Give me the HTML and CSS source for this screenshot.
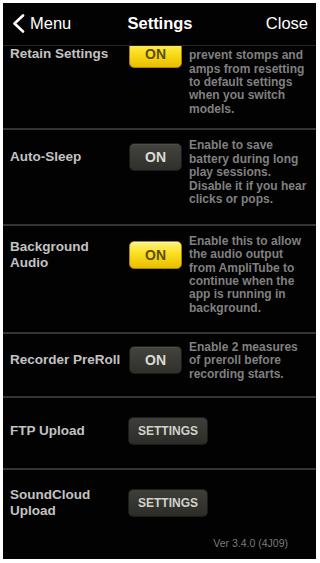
FILE: index.html
```html
<!DOCTYPE html>
<html>
<head>
<meta charset="utf-8">
<link rel="stylesheet" href="styles.css">
</head>
<body>
<div class="app">
  <header class="nav">
    <div class="nav-left">
      <svg class="chev" width="13" height="19" viewBox="0 0 13 19"><path d="M11 1.5 L2.5 9.5 L11 17.5" fill="none" stroke="#fff" stroke-width="2.6" stroke-linecap="round" stroke-linejoin="round"/></svg>
      <span>Menu</span>
    </div>
    <div class="nav-title">Settings</div>
    <div class="nav-right">Close</div>
  </header>
  <div class="scroll">
    <div class="list">
      <div class="row row-retain">
        <div class="item">
          <div class="main"><div class="label">Retain Settings</div><div class="toggle on">ON</div></div>
          <div class="desc">Enable this to<br>prevent stomps and<br>amps from resetting<br>to default settings<br>when you switch<br>models.</div>
        </div>
      </div>
      <div class="row row-auto">
        <div class="item">
          <div class="main"><div class="label">Auto-Sleep</div><div class="toggle">ON</div></div>
          <div class="desc">Enable to save<br>battery during long<br>play sessions.<br>Disable it if you hear<br>clicks or pops.</div>
        </div>
      </div>
      <div class="row row-bg">
        <div class="item">
          <div class="main"><div class="label">Background<br>Audio</div><div class="toggle on">ON</div></div>
          <div class="desc">Enable this to allow<br>the audio output<br>from AmpliTube to<br>continue when the<br>app is running in<br>background.</div>
        </div>
      </div>
      <div class="row row-rec">
        <div class="item">
          <div class="main"><div class="label">Recorder PreRoll</div><div class="toggle">ON</div></div>
          <div class="desc desc-short">Enable 2 measures<br>of preroll before<br>recording starts.</div>
        </div>
      </div>
      <div class="row row-ftp">
        <div class="item">
          <div class="main"><div class="label">FTP Upload</div><div class="btn">SETTINGS</div></div>
        </div>
      </div>
      <div class="row-last">
        <div class="item">
          <div class="main"><div class="label">SoundCloud<br>Upload</div><div class="btn">SETTINGS</div></div>
        </div>
        <div class="version">Ver 3.4.0 (4J09)</div>
      </div>
    </div>
  </div>
</div>
</body>
</html>
```
FILE: styles.css
```css
html, body {
  margin: 0;
  padding: 0;
  background: #fff;
}
body {
  font-family: "Liberation Sans", Arial, sans-serif;
}
.app {
  margin: 3px 4px 4px 3px;
  width: 313px;
  height: 556px;
  background: #020202;
  display: flex;
  flex-direction: column;
  overflow: hidden;
}
.nav {
  height: 43px;
  box-sizing: border-box;
  border-bottom: 1px solid #262626;
  display: grid;
  grid-template-columns: 1fr auto 1fr;
  align-items: center;
  padding: 0 8px 1px 9px;
  color: #fff;
  font-size: 16.5px;
  flex: none;
}
.nav-left {
  display: flex;
  align-items: center;
  gap: 5px;
}
.chev { display: block; }
.nav-title {
  font-weight: bold;
  font-size: 16.5px;
}
.nav-right {
  text-align: right;
}
.scroll {
  flex: 1;
  overflow: hidden;
}
.list {
  margin-top: -22px;
}
.row {
  box-sizing: border-box;
  border-bottom: 2px solid #343434;
  display: flex;
  align-items: center;
  padding: 0 0 8px 7px;
}
.row-retain { height: 106px; padding-bottom: 0; }
.row-auto { height: 96px; }
.row-bg { height: 108px; }
.row-rec { height: 64px; }
.row-ftp { height: 72px; }
.row-last {
  padding: 17px 0 0 7px;
}
.item {
  display: flex;
  align-items: flex-start;
}
.main {
  display: flex;
  align-items: center;
  margin-top: 4px;
}
.row-rec .main { margin-top: 5px; }
.row-last .main { margin-top: 0; }
.label {
  width: 119px;
  color: #c2c2c2;
  font-weight: bold;
  font-size: 13.5px;
  line-height: 16px;
}
.toggle {
  width: 53px;
  height: 28px;
  box-sizing: border-box;
  border-radius: 5px;
  display: flex;
  align-items: center;
  justify-content: center;
  font-weight: bold;
  font-size: 14px;
  color: #dcdcd6;
  background: linear-gradient(#44443f, #2f2f2b);
  border: 1px solid #1c1c1a;
  box-shadow: inset 0 1px 0 rgba(255,255,255,0.06);
}
.toggle.on {
  color: #5e4e00;
  background: linear-gradient(#fff27a 0%, #fadf1e 45%, #e9be00 100%);
  border: 1px solid #a88400;
  box-shadow: inset 0 1px 0 rgba(255,255,255,0.5);
}
.btn {
  width: 80px;
  height: 28px;
  box-sizing: border-box;
  border-radius: 5px;
  display: flex;
  align-items: center;
  justify-content: center;
  font-weight: bold;
  font-size: 12px;
  color: #d2d2cc;
  background: linear-gradient(#3e3e3a, #2c2c29);
  border: 1px solid #1c1c1a;
  margin-left: -1px;
}
.desc {
  margin-left: 7px;
  color: #808080;
  font-weight: bold;
  font-size: 12px;
  line-height: 13.4px;
  white-space: nowrap;
}
.version {
  margin-top: 18px;
  padding-right: 28px;
  text-align: right;
  color: #7a7a7a;
  font-size: 10.5px;
  line-height: 12px;
}
```
